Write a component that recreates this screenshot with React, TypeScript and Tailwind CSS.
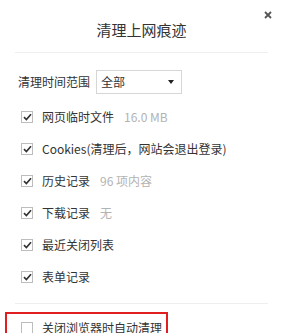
const font = { fontFamily: '"Noto Sans CJK SC", "Noto Sans", sans-serif' };

const Check = ({ checked = true }: { checked?: boolean }) => (
  <span className="flex h-[12px] w-[12px] shrink-0 items-center justify-center border border-[#bdbdbd] bg-white">
    {checked ? (
      <svg width="9" height="8" viewBox="0 0 9 8">
        <path d="M1 4.2 L3.4 6.5 L8 1.3" fill="none" stroke="#333" strokeWidth="1.7" />
      </svg>
    ) : null}
  </span>
);

const items: { label: string; extra?: string }[] = [
  { label: "网页临时文件", extra: "16.0 MB" },
  { label: "Cookies(清理后，网站会退出登录)" },
  { label: "历史记录", extra: "96 项内容" },
  { label: "下载记录", extra: "无" },
  { label: "最近关闭列表" },
  { label: "表单记录" },
];

export default function App() {
  return (
    <div className="relative h-[333px] w-[283px] overflow-hidden bg-white text-[#333]" style={font}>
      {/* close */}
      <svg className="absolute left-[264px] top-[11px]" width="8" height="8" viewBox="0 0 8 8">
        <path d="M1 1 L7 7 M7 1 L1 7" stroke="#555" strokeWidth="1.8" />
      </svg>

      <div className="pt-[20px] text-center text-[15px] leading-[20px]">清理上网痕迹</div>
      <div className="mx-[15px] mt-[12px] h-px bg-[#eeeeee]" />

      {/* range select */}
      <div className="mt-[17px] flex items-center pl-[18px]">
        <span className="w-[78px] text-[12px] leading-[16px]">清理时间范围</span>
        <div className="flex h-[24px] w-[86px] items-center justify-between border border-[#d6d6d6] pl-[4px] pr-[7px] text-[12px]">
          <span>全部</span>
          <span className="h-0 w-0 border-x-[3.5px] border-t-[4px] border-x-transparent border-t-[#222]" />
        </div>
      </div>

      {/* options */}
      <div className="mt-[7px]">
        {items.map((it) => (
          <div key={it.label} className="flex h-[32px] items-center pl-[21px]">
            <Check />
            <span className="ml-[9px] text-[12px] leading-[16px]">{it.label}</span>
            {it.extra ? (
              <span className="ml-[10px] text-[12px] leading-[16px] text-[#b3b3b3]">{it.extra}</span>
            ) : null}
          </div>
        ))}
      </div>

      <div className="mx-[15px] mt-[10px] h-px bg-[#eeeeee]" />

      {/* auto clean */}
      <div className="ml-[5px] mt-[8px] flex h-[32px] w-[163px] items-center border-2 border-[#e02020] pl-[14px]">
        <Check checked={false} />
        <span className="ml-[9px] text-[12px] leading-[16px]">关闭浏览器时自动清理</span>
      </div>
    </div>
  );
}
